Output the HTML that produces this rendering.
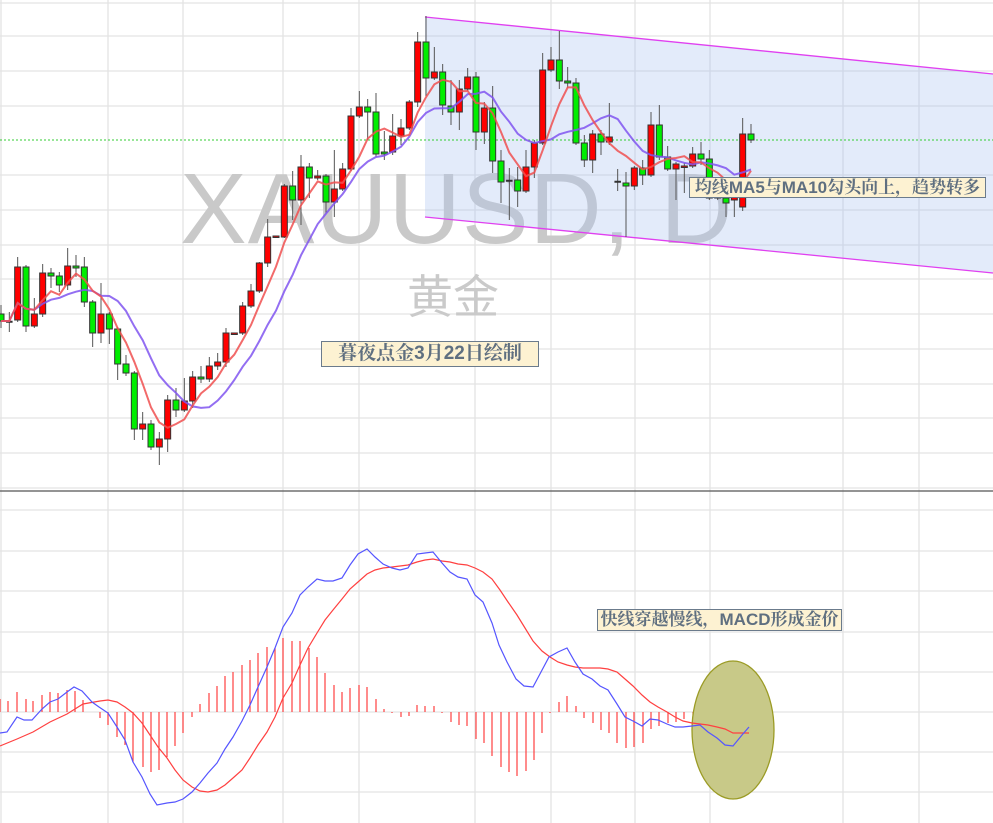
<!DOCTYPE html>
<html><head><meta charset="utf-8"><style>
html,body{margin:0;padding:0;background:#fff;width:993px;height:823px;overflow:hidden}
svg{position:absolute;left:0;top:0}
.lbl{position:absolute;background:#fdf2d2;border:1px solid #6b7b8c;color:#5f6f80;font-family:"Liberation Sans","Noto Serif CJK SC",serif;font-weight:bold;white-space:nowrap;line-height:1;overflow:hidden}
</style></head><body>
<svg id="s" width="993" height="823" xmlns="http://www.w3.org/2000/svg">
<g id="grid" stroke="#e3e3e3" stroke-width="1.3"></g>
<text x="180" y="243" font-family="Liberation Sans,sans-serif" font-size="100" letter-spacing="1" fill="#c9c9c9">XAUUSD, D</text>
<text x="407" y="313" font-family="Liberation Sans,Noto Sans CJK SC,sans-serif" font-size="46" fill="#cacaca">黄金</text>
<polygon points="425,17 993,74 993,273 425,217" fill="rgba(170,195,240,0.33)"/>
<line x1="425" y1="17" x2="993" y2="74" stroke="#e040f0" stroke-width="1.3"/>
<line x1="425" y1="217" x2="993" y2="273" stroke="#e040f0" stroke-width="1.3"/>
<line x1="0" y1="140" x2="993" y2="140" stroke="#33cc33" stroke-width="1" stroke-dasharray="2,2"/>
<line x1="0" y1="491" x2="993" y2="491" stroke="#555" stroke-width="1.3"/>
<g id="candles"></g>
<g id="ma"></g>
<g id="hist" stroke="#ff4040" stroke-width="1.2"></g>
<ellipse cx="733" cy="730" rx="41" ry="69" fill="#c8c988" stroke="#9b9b25" stroke-width="1.3"/>
<polyline fill="none" stroke="#ff4040" stroke-width="1.2" points="0,746 17,739 33,732 50,722 67,714 83,704 100,701 108,700 117,702 125,707 133,713 142,723 150,735 158,747 167,758 175,770 183,780 192,787 200,791 208,792 217,790 225,785 233,778 242,770 250,758 258,745 267,732 275,717 283,698 292,683 300,665 308,648 317,633 325,620 333,610 342,599 350,589 358,582 367,574 375,570 383,568 392,567 400,566 408,565 417,562 425,560 433,559 442,561 450,562 458,564 467,565 475,568 483,572 492,579 500,590 508,602 517,615 525,628 533,641 542,651 550,657 558,662 567,665 575,667 583,668 600,668 608,669 617,672 625,679 633,686 642,695 650,702 658,707 667,712 675,717 683,721 692,723 700,724 708,725 717,727 725,729 733,733 742,733 749,733"/>
<polyline fill="none" stroke="#5555ff" stroke-width="1.2" points="0,733 7,732 17,717 24,720 32,720 42,709 50,702 58,699 67,692 74,687 82,691 92,702 99,707 108,713 117,727 125,740 133,762 142,777 150,794 157,805 167,803 175,802 183,799 192,792 200,783 208,773 217,763 225,749 233,737 242,721 250,705 258,687 267,667 275,648 283,627 292,613 300,595 308,587 317,579 325,581 333,581 342,578 350,565 358,554 367,549 375,557 383,564 392,568 400,570 408,568 417,554 425,553 433,552 442,563 450,572 458,577 467,579 475,595 483,602 492,623 499,645 507,662 516,679 524,686 533,687 541,672 549,657 558,652 567,648 575,662 583,674 592,679 600,686 608,690 617,704 625,717 633,721 642,726 650,719 658,720 667,724 675,727 683,727 692,726 700,725 708,732 717,738 725,745 733,746 742,735 749,727"/>
</svg>
<div class="lbl" style="left:321px;top:341px;width:216px;height:24px;font-size:19px;line-height:24px;text-align:center">暮夜点金3月22日绘制</div>
<div class="lbl" style="left:689px;top:177px;width:295px;height:19px;font-size:17px;line-height:19px;text-align:center">均线MA5与MA10勾头向上，趋势转多</div>
<div class="lbl" style="left:597px;top:609px;width:243px;height:20px;font-size:17px;line-height:20px;text-align:center">快线穿越慢线，MACD形成金价</div>
<script>
var NS="http://www.w3.org/2000/svg";
function el(p,t,a){var e=document.createElementNS(NS,t);for(var k in a)e.setAttribute(k,a[k]);p.appendChild(e);return e;}
var g=document.getElementById('grid');
[1,108,183,283,359,475,551,635,710,843,919].forEach(function(x){el(g,'line',{x1:x,y1:0,x2:x,y2:823});});
[3,36,71,106,175,210,245,279,314,349,384,418,453,488,510,551,591,632,672,712,752,792].forEach(function(y){el(g,'line',{x1:0,y1:y,x2:993,y2:y});});
var D=[[314,321,305,328,'g'],[321,322,312,332,'d'],[267,320,257,322,'r'],[267,326,265,332,'g'],[314,326,298,328,'r'],[273,314,264,317,'r'],[273,276,268,288,'g'],[276,285,272,292,'g'],[266,285,248,290,'r'],[266,268,255,277,'g'],[267,302,257,307,'g'],[302,333,300,347,'g'],[314,333,283,343,'r'],[314,329,312,344,'g'],[329,364,327,380,'g'],[364,373,355,376,'g'],[373,429,371,440,'g'],[424,429,412,440,'r'],[424,447,420,450,'g'],[439,447,432,465,'r'],[400,439,395,452,'r'],[400,410,388,417,'g'],[401,410,378,412,'r'],[377,401,371,408,'r'],[377,379,366,383,'g'],[366,379,357,382,'r'],[362,366,353,370,'r'],[333,362,328,367,'r'],[333,334,333,334,'r'],[306,333,302,335,'r'],[291,306,284,308,'r'],[263,291,262,293,'r'],[237,263,219,267,'r'],[236,237,236,237,'r'],[186,237,184,238,'r'],[186,200,171,220,'g'],[167,200,155,225,'r'],[167,178,163,198,'g'],[176,178,170,180,'r'],[176,202,174,213,'g'],[189,202,150,217,'r'],[169,189,163,191,'r'],[116,169,108,171,'r'],[107,116,91,118,'r'],[107,112,99,140,'g'],[112,154,93,157,'g'],[152,154,131,160,'g'],[136,152,114,155,'r'],[128,136,119,145,'r'],[102,128,100,130,'r'],[42,102,32,107,'r'],[42,78,16,96,'g'],[72,78,47,80,'r'],[72,105,64,115,'g'],[106,112,80,125,'g'],[89,112,80,130,'r'],[77,89,68,91,'r'],[77,132,72,150,'g'],[108,132,102,144,'r'],[108,161,86,173,'g'],[161,182,150,203,'g'],[180,181,168,220,'d'],[180,191,167,207,'g'],[167,191,150,193,'r'],[143,167,140,178,'r'],[70,143,53,145,'r'],[60,70,47,72,'r'],[60,81,31,89,'g'],[81,83,67,88,'g'],[83,143,78,145,'g'],[143,160,135,167,'g'],[134,160,130,173,'r'],[134,142,130,155,'g'],[137,142,103,145,'r'],[181,182,169,191,'d'],[183,186,172,237,'g'],[168,186,166,190,'r'],[168,175,160,185,'g'],[125,175,112,177,'r'],[125,157,105,160,'g'],[157,169,146,171,'g'],[164,169,162,200,'r'],[166,167,163,193,'r'],[154,166,147,168,'r'],[154,159,142,165,'g'],[159,198,150,200,'g'],[187,198,180,200,'r'],[198,203,196,217,'g'],[190,200,188,217,'r'],[134,207,118,211,'r'],[134,140,124,143,'g']];
var c=document.getElementById('candles');
var closes=[];
D.forEach(function(d,i){var x=1+i*750/90;
 el(c,'line',{x1:x,y1:d[2],x2:x,y2:d[3],stroke:'#555','stroke-width':1});
 var h=Math.max(d[1]-d[0],1.5);
 var f=d[4]=='r'?'#ff0000':(d[4]=='g'?'#00ee00':'#333');
 el(c,'rect',{x:x-3,y:d[0],width:6,height:h,fill:f,stroke:'#333','stroke-width':d[4]=='d'?0.5:1});
 closes.push(d[4]=='g'?d[1]:d[0]);
});
var m=document.getElementById('ma');
function ma(n,col){var pts=[];for(var i=0;i<closes.length;i++){var s=0,k=0;for(var j=Math.max(0,i-n+1);j<=i;j++){s+=closes[j];k++;}pts.push((1+i*750/90).toFixed(1)+','+(s/k).toFixed(1));}
 el(m,'polyline',{points:pts.join(' '),fill:'none',stroke:col,'stroke-width':2,'stroke-opacity':0.85});}
ma(10,'#8055f0');ma(5,'#f05050');
var H=[[0,699],[8,701],[17,692],[26,699],[33,701],[42,695],[50,692],[58,693],[67,690],[75,691],[83,700],[100,718],[108,725],[117,737],[125,745],[133,762],[143,767],[151,772],[159,770],[167,757],[175,746],[183,733],[192,717],[200,704],[209,693],[217,686],[225,676],[233,672],[242,665],[250,660],[258,653],[267,647],[275,648],[283,638],[292,641],[300,641],[309,648],[317,657],[325,673],[334,685],[342,692],[350,688],[359,685],[367,687],[376,699],[384,709],[392,713],[401,717],[409,716],[417,705],[425,706],[434,706],[442,713],[451,722],[459,725],[467,726],[476,739],[484,743],[492,756],[501,767],[509,772],[517,776],[526,771],[534,760],[542,733],[550,713],[559,702],[567,696],[576,706],[584,718],[593,723],[601,730],[609,733],[617,743],[626,748],[634,747],[643,743],[651,729],[659,726],[668,723],[676,722],[684,719],[693,715],[701,713],[709,719],[717,725],[726,727],[734,725],[743,713],[751,705]];
var hg=document.getElementById('hist');
H.forEach(function(p){el(hg,'line',{x1:p[0],y1:712,x2:p[0],y2:p[1]});});
</script>
</body></html>
